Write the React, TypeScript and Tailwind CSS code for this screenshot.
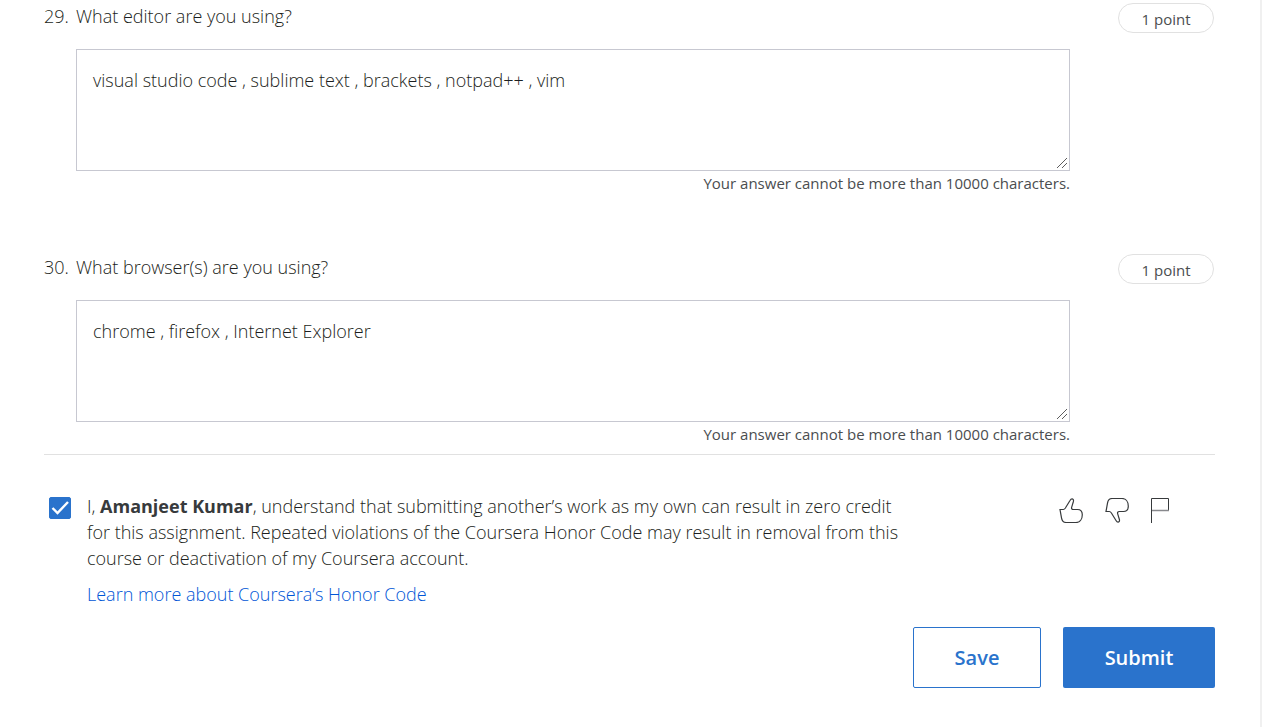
import React, { useState } from "react";

type QuestionProps = { number: number; prompt: string; answer: string };

function Question({ number, prompt, answer }: QuestionProps) {
  const id = `question-${number}`;
  return (
    <section className="flex items-start">
      <span className="w-8 shrink-0 text-lg leading-[26px]">{number}.</span>
      <div className="min-w-0 flex-1">
        <label htmlFor={id} className="block text-lg leading-[26px]">
          {prompt}
        </label>
        <div className="relative mt-5">
          <textarea
            id={id}
            defaultValue={answer}
            maxLength={10000}
            className="block h-[122px] w-full resize-none border border-[#c7c8d1] bg-white px-4 py-[17px] text-lg leading-[26px] outline-none"
          />
          <svg
            aria-hidden="true"
            className="pointer-events-none absolute bottom-[3px] right-[3px] size-[10px]"
            viewBox="0 0 10 10"
            fill="none"
            stroke="#333"
            strokeWidth="0.8"
          >
            <path d="M0 10 10 0M5 10l5-5" />
          </svg>
        </div>
        <p className="text-right text-[15px] font-normal leading-6 text-[#4a4d4f]">
          Your answer cannot be more than 10000 characters.
        </p>
      </div>
      <span className="ml-12 mr-px flex h-[30px] w-24 shrink-0 items-center justify-center rounded-full border border-[#e1e1e1] pt-0.5 text-[15px] font-normal text-[#4a4d4f]">
        1 point
      </span>
    </section>
  );
}

const thumb =
  "M1 11.5h3.3c1 0 1.5-.6 2.1-1.5L11 2.5C11.6 1.4 12.3.7 13.2.8c1.2.2 1.5 1.3 1.2 2.7l-1.7 5.6c-.5 1.5.2 2.4 1.6 2.4h4.2c2.8 0 4.8 2 4.800 5.300 0 4.600-2.600 7.700-6.300 7.700H7.200c-2.800 0-4.200-1.700-4.700-4.700z";

export default function App() {
  const [agreed, setAgreed] = useState(true);
  return (
    <main className="min-h-screen border-r-2 border-[#f0f0f0] bg-white pb-10 pl-11 pr-[45px] pt-[3px] font-['Open_Sans',sans-serif] font-light text-[#1b1e20]">
      <div className="space-y-[59px]">
        <Question number={29} prompt="What editor are you using?" answer="visual studio code , sublime text , brackets , notpad++ , vim" />
        <Question number={30} prompt="What browser(s) are you using?" answer="chrome , firefox , Internet Explorer" />
      </div>
      <hr className="mt-2 border-[#e1e1e1]" />
      <div className="mt-[38px] flex items-start justify-between">
        <div className="flex items-start">
          <span className="relative ml-[5px] mt-1 block size-[22px] shrink-0">
            <input
              id="honor-code"
              type="checkbox"
              checked={agreed}
              onChange={(event) => setAgreed(event.target.checked)}
              className="block size-full appearance-none rounded-[2px] border border-[#2a73cc] bg-white checked:bg-[#2a73cc]"
            />
            {agreed && (
              <svg
                aria-hidden="true"
                className="pointer-events-none absolute inset-0 size-full"
                viewBox="0 0 22 22"
                fill="none"
                stroke="white"
                strokeWidth="2.4"
              >
                <path d="m3.500 11 5 5L19 5" />
              </svg>
            )}
          </span>
          <div className="ml-4 max-w-[822px] text-lg leading-[26px]">
            <label htmlFor="honor-code" className="block">
              I, <strong className="font-bold text-[#373a3c]">Amanjeet Kumar</strong>, understand that submitting another’s work as my own can result in zero credit
              for this assignment. Repeated violations of the Coursera Honor Code may result in removal from this course or
              deactivation of my Coursera account.
            </label>
            <a href="#honor-code" className="mt-[10px] block text-[#0056d6]">
              Learn more about Coursera’s Honor Code
            </a>
          </div>
        </div>
        <div className="mr-[46px] mt-[5px] flex items-start gap-[21px]">
          <button type="button" aria-label="Like" className="block size-[25px]">
            <svg className="size-full" viewBox="0 0 25 25" fill="none" stroke="#373a3c" strokeWidth="1.2">
              <path d={thumb} />
            </svg>
          </button>
          <button type="button" aria-label="Dislike" className="block size-[25px]">
            <svg className="size-full" viewBox="0 0 25 25" fill="none" stroke="#373a3c" strokeWidth="1.2">
              <g transform="matrix(1 0 0 -1 0 25)">
                <path d={thumb} />
              </g>
            </svg>
          </button>
          <button type="button" aria-label="Report a problem" className="block h-[25px] w-[18px]">
            <svg className="size-full" viewBox="0 0 18 25" fill="none" stroke="#373a3c">
              <path d="M.5 25V.5h17v12" />
              <path d="M1 12.5h17" stroke="#88898d" strokeWidth="1.5" />
            </svg>
          </button>
        </div>
      </div>
      <div className="mt-5 flex justify-end gap-[22px] text-xl font-semibold">
        <button type="button" className="h-[61px] w-32 rounded-[2px] border border-[#2a73cc] text-[#2a73cc]">
          Save
        </button>
        <button type="submit" className="h-[61px] w-[152px] rounded-[2px] bg-[#2a73cc] text-white">
          Submit
        </button>
      </div>
    </main>
  );
}
